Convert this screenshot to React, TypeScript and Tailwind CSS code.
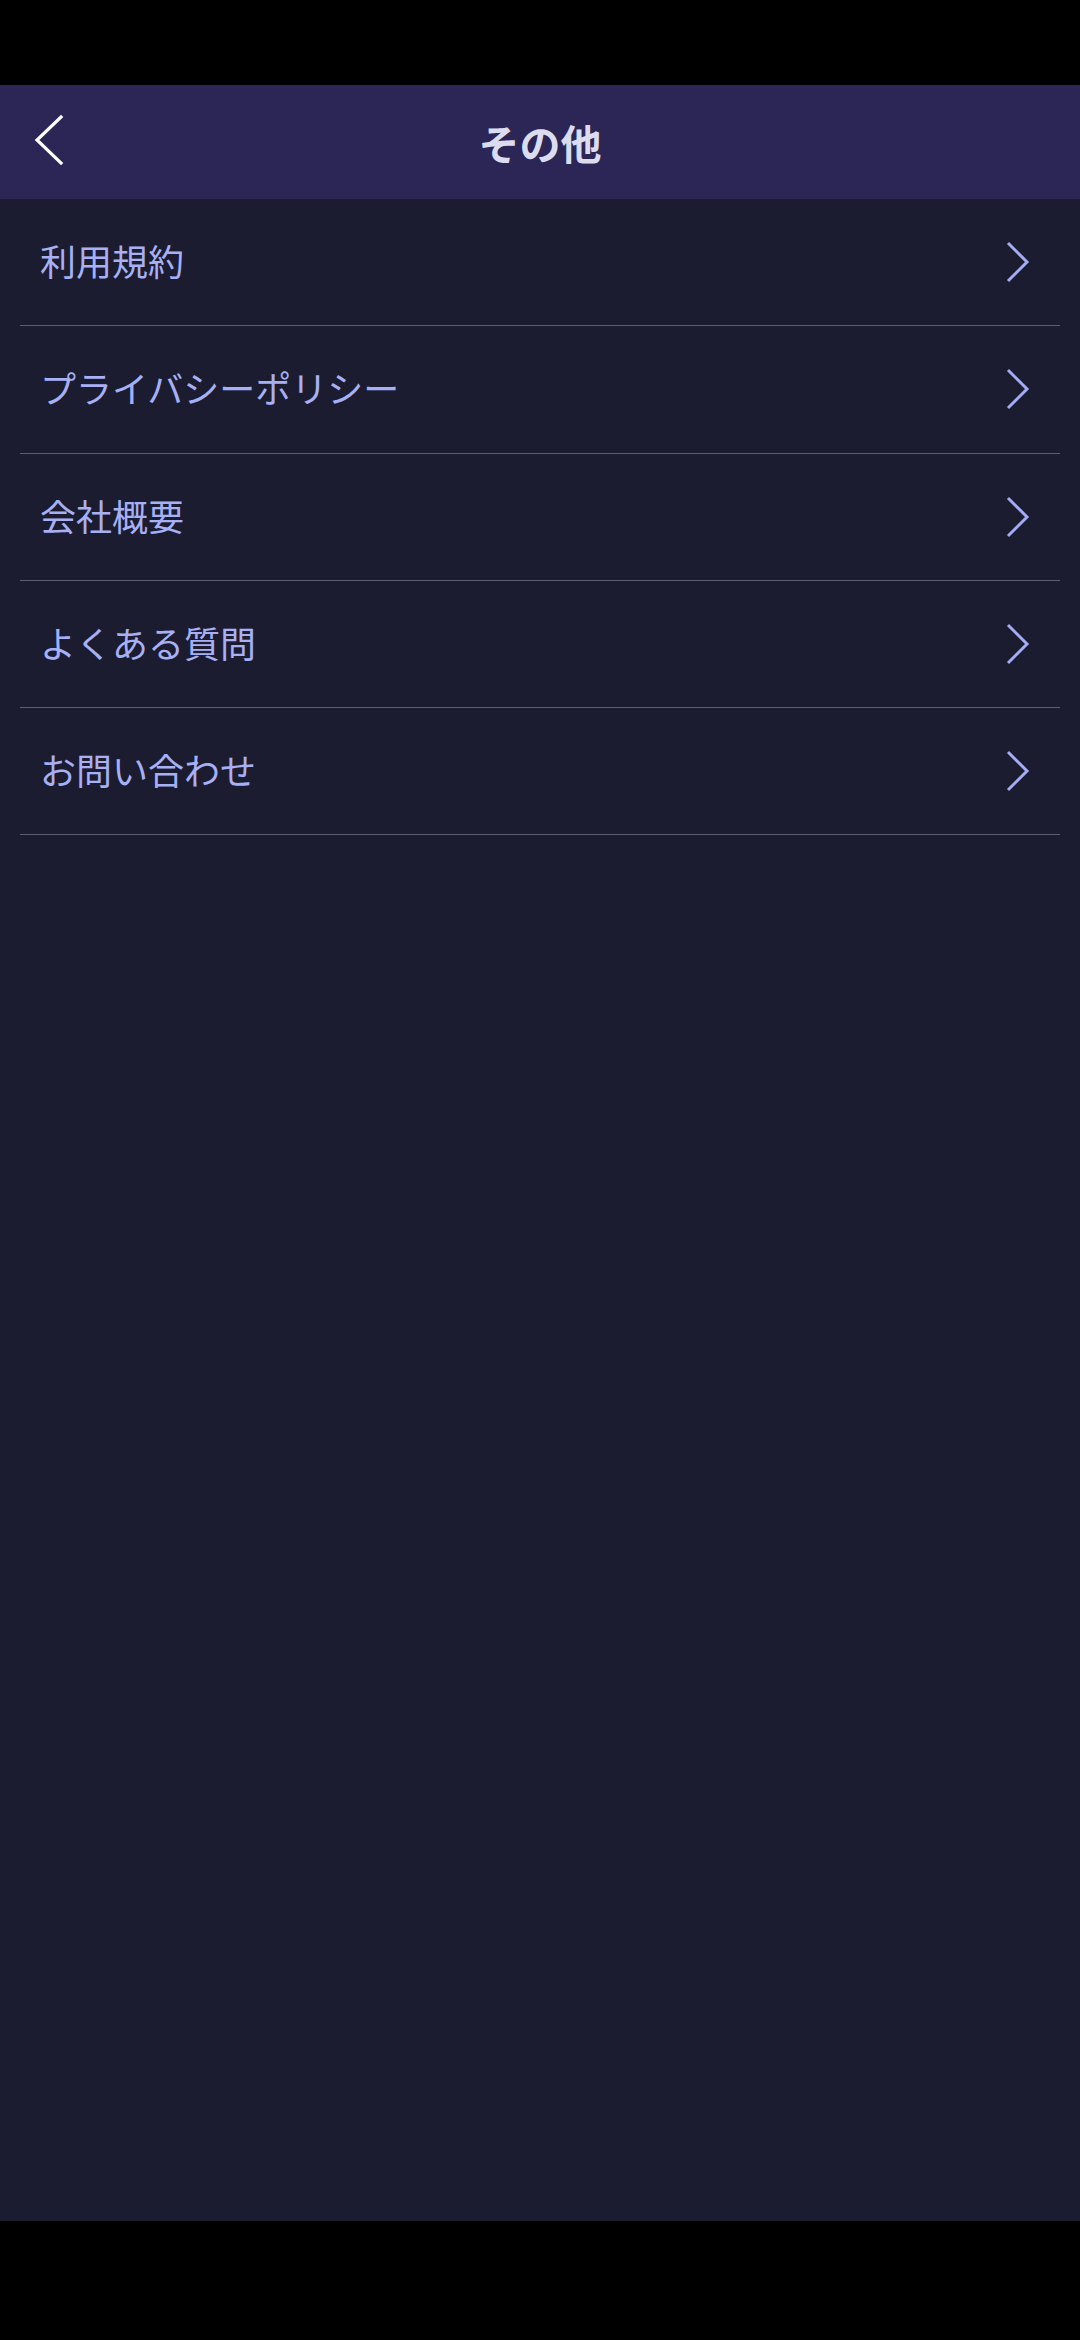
import { ChevronLeft, ChevronRight } from 'lucide-react'

const items = ['利用規約', 'プライバシーポリシー', '会社概要', 'よくある質問', 'お問い合わせ']

export default function App() {
  return (
    <div
      className="flex flex-col w-[1080px] h-[2340px] bg-black"
      style={{ fontFamily: '"Noto Sans CJK JP", "Noto Sans", sans-serif' }}
    >
      {/* status bar area */}
      <div className="h-[85px] shrink-0 bg-black" />

      {/* Header */}
      <header className="relative h-[114px] shrink-0 flex items-center justify-center bg-[#2b2656]">
        <button className="absolute left-[26px] top-[29px] text-white">
          <svg width="46" height="52" viewBox="0 0 46 52" fill="none">
            <path d="M35 3 L11 26 L35 49" stroke="currentColor" strokeWidth="3.2" strokeLinecap="square" />
          </svg>
        </button>
        <h1 className="text-[41px] font-bold leading-none text-[#dcdcee]">その他</h1>
      </header>

      {/* List */}
      <main className="flex-1 bg-[#1b1c30]">
        <ul className="px-[20px]">
          {items.map((item) => (
            <li
              key={item}
              className="h-[127.3px] flex items-center justify-between pl-[20px] pr-[30px] border-b border-[#5c5d70]"
            >
              <span className="text-[36px] leading-none text-[#a8b0f4] -translate-y-[2px]">{item}</span>
              <svg width="26" height="42" viewBox="0 0 26 42" fill="none" className="text-[#a4acf4]">
                <path d="M4 2 L23 21 L4 40" stroke="currentColor" strokeWidth="3" />
              </svg>
            </li>
          ))}
        </ul>
      </main>

      {/* nav bar area */}
      <div className="h-[119px] shrink-0 bg-black" />
    </div>
  )
}
